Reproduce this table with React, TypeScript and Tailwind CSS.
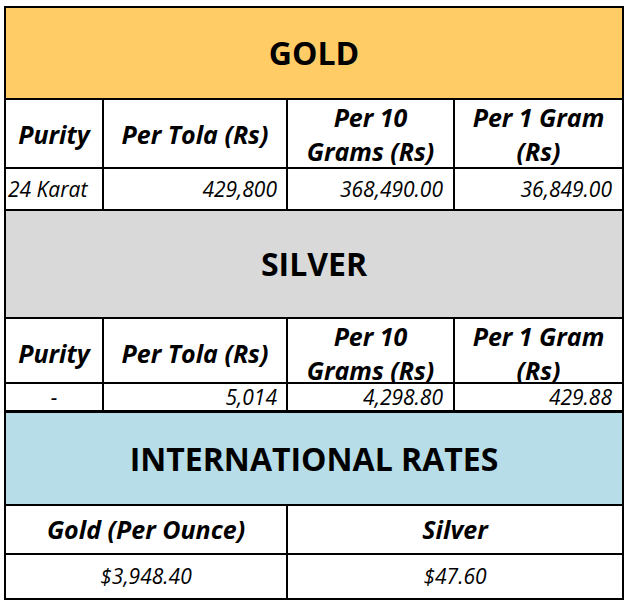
const goldRates = { purity: "24 Karat", tola: "429,800", tenGrams: "368,490.00", gram: "36,849.00" };
const silverRates = { purity: "-", tola: "5,014", tenGrams: "4,298.80", gram: "429.88" };

function Band({ title, bg, h }: { title: string; bg: string; h: string }) {
  return (
    <div className={`${bg} ${h} flex items-center justify-center border-b-2 border-black`}>
      <span className="text-[32px] font-bold text-black leading-none">{title}</span>
    </div>
  );
}

function HeaderRow({ h }: { h: string }) {
  const cell = "flex items-center justify-center text-center font-bold italic text-[25px] leading-[34px] border-black";
  return (
    <div className={`grid grid-cols-[98px_184px_167px_1fr] ${h} border-b-2 border-black`}>
      <div className={`${cell} border-r-2`}>Purity</div>
      <div className={`${cell} border-r-2`}>Per Tola (Rs)</div>
      <div className={`${cell} border-r-2`}>
        Per 10
        <br />
        Grams (Rs)
      </div>
      <div className={cell}>
        Per 1 Gram
        <br />
        (Rs)
      </div>
    </div>
  );
}

function DataRow({ r, h, border, centerFirst }: { r: typeof goldRates; h: string; border: string; centerFirst?: boolean }) {
  const cell = "flex items-center italic text-[21px] leading-none border-black";
  return (
    <div className={`grid grid-cols-[98px_184px_167px_1fr] ${h} ${border} border-black`}>
      <div className={`${cell} border-r-2 ${centerFirst ? "justify-center" : "justify-start pl-[2px]"}`}>{r.purity}</div>
      <div className={`${cell} border-r-2 justify-end pr-[9px]`}>{r.tola}</div>
      <div className={`${cell} border-r-2 justify-end pr-[10px]`}>{r.tenGrams}</div>
      <div className={`${cell} justify-end pr-[10px]`}>{r.gram}</div>
    </div>
  );
}

export default function App() {
  return (
    <div className="bg-white min-h-[602px] pt-[6px] pl-[4px] font-['Open_Sans',sans-serif] text-black">
      <div className="w-[620px] border-2 border-black">
        <Band title="GOLD" bg="bg-[#ffcc66]" h="h-[92px]" />
        <HeaderRow h="h-[69px]" />
        <DataRow r={goldRates} h="h-[42px]" border="border-b-2" />

        <Band title="SILVER" bg="bg-[#d9d9d9]" h="h-[108px]" />
        <HeaderRow h="h-[65px]" />
        <DataRow r={silverRates} h="h-[29px]" border="border-b-[3px]" centerFirst />

        <Band title="INTERNATIONAL RATES" bg="bg-[#b7dde8]" h="h-[93px]" />
        <div className="grid grid-cols-[282px_1fr] h-[49px] border-b-2 border-black">
          <div className="flex items-center justify-center font-bold italic text-[25px] border-r-2 border-black">Gold (Per Ounce)</div>
          <div className="flex items-center justify-center font-bold italic text-[25px]">Silver</div>
        </div>
        <div className="grid grid-cols-[282px_1fr] h-[43px]">
          <div className="flex items-center justify-center italic text-[21px] border-r-2 border-black">$3,948.40</div>
          <div className="flex items-center justify-center italic text-[21px]">$47.60</div>
        </div>
      </div>
    </div>
  );
}
